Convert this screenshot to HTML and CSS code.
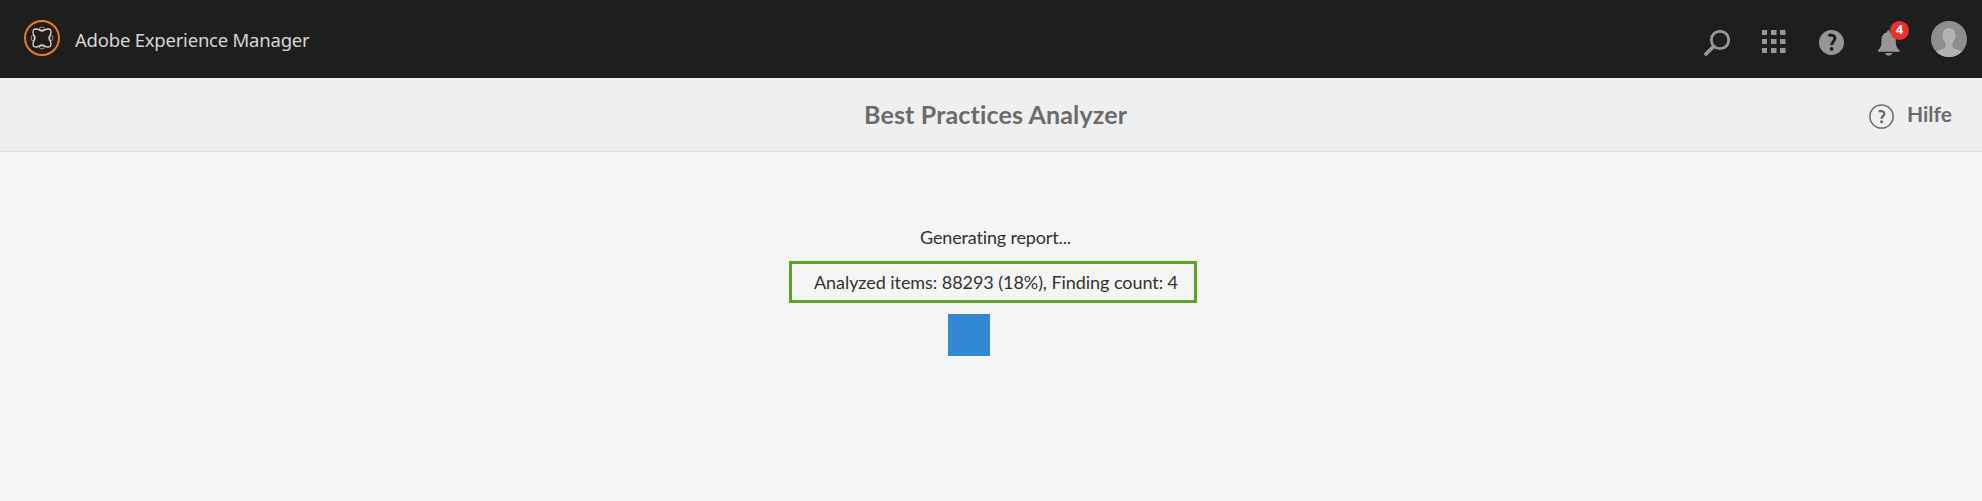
FILE: index.html
```html
<!DOCTYPE html>
<html lang="de">
<head>
<meta charset="utf-8">
<title>Best Practices Analyzer</title>
<link rel="stylesheet" href="styles.css">
</head>
<body>
<header class="shell">
  <div class="brand">
    <svg class="logo" width="36" height="36" viewBox="0 0 36 36" fill="none">
      <circle cx="18" cy="18" r="17" stroke="#f87a1c" stroke-width="1.9"/>
      <g stroke="#e9d4c9">
        <path stroke-width="1.300" d="M18 10.500C15.500 10.500 14 8.900 12 9C9.500 9.200 9.200 9.500 9 12C8.900 14 10.500 15.500 10.500 18C10.500 20.500 8.900 22 9 24C9.200 26.500 9.500 26.800 12 27C14 27.100 15.500 25.500 18 25.500C20.500 25.500 22 27.100 24 27C26.500 26.800 26.800 26.500 27 24C27.100 22 25.500 20.500 25.500 18C25.500 15.500 27.100 14 27 12C26.800 9.500 26.500 9.200 24 9C22 8.900 20.500 10.500 18 10.500Z"/>
        <g stroke-width="1" opacity=".6">
          <ellipse cx="18" cy="9.300" rx="3" ry="2.200"/>
          <ellipse cx="18" cy="26.700" rx="3" ry="2.200"/>
          <ellipse cx="9.300" cy="18" rx="2.200" ry="3"/>
          <ellipse cx="26.700" cy="18" rx="2.200" ry="3"/>
        </g>
      </g>
    </svg>
    <span class="brand-name">Adobe Experience Manager</span>
  </div>
  <nav class="tools">
    <svg class="search" width="26" height="26" viewBox="0 0 26 26" fill="none" stroke="#969696">
      <circle cx="16" cy="10" r="8.700" stroke-width="2.800"/>
      <path d="M9.400 16.600L2 24" stroke-width="3.700" stroke-linecap="round"/>
    </svg>
    <svg class="grid" width="24" height="24" viewBox="0 0 24 24" fill="#969696">
      <path d="M0 0h5v5H0zM9 0h5.500v5H9zM18 0h5.500v5H18zM0 9h5v5H0zM9 9h5.500v5H9zM18 9h5.500v5H18zM0 18h5v5H0zM9 18h5.500v5H9zM18 18h5.500v5H18z"/>
    </svg>
    <svg class="help" width="25" height="25" viewBox="0 0 25 25">
      <circle cx="12.500" cy="12.500" r="12.500" fill="#969696"/>
      <path d="M9.400 5.700C12 4.400 15.900 5.100 15.900 8.300C15.900 11.300 12.600 11.700 12.800 15.200" fill="none" stroke="#1e1e1e" stroke-width="2.900"/>
      <circle cx="12.600" cy="18.900" r="1.900" fill="#1e1e1e"/>
    </svg>
    <div class="alerts">
      <svg width="22" height="26" viewBox="0 0 22 26" fill="#969696">
        <path d="M10.500 0C11.500 0 11.700 .8 11.700 2.200C16.300 3 17.800 6.500 17.800 10.500C17.800 16 19 18.500 21.500 20.300V21.800H0V20.300C2.500 18.500 3.500 16 3.500 10.500C3.500 6.500 5 3 9.300 2.200C9.300 .8 9.500 0 10.500 0ZM7 23H14.300C13.300 26.500 8 26.500 7 23Z"/>
      </svg>
      <span class="badge">4</span>
    </div>
    <svg class="avatar" width="36" height="36" viewBox="0 0 36 36">
      <defs><clipPath id="disc"><circle cx="18" cy="18" r="18"/></clipPath></defs>
      <g clip-path="url(#disc)">
        <rect width="36" height="36" fill="#8e8e8e"/>
        <path d="M18 7C22.500 7 24.300 10 24 14C25 14.500 24.500 18 23.300 18.500C23 20.500 22 21.500 21.500 22.500V26C22 28.500 30 28.500 32 32V36H4V32C6 28.500 14 28.500 14.500 26V22.500C14 21.500 13 20.500 12.700 18.500C11.500 18 11 14.500 12 14C11.700 10 13.500 7 18 7Z" fill="#b3b3b3"/>
      </g>
    </svg>
  </nav>
</header>
<div class="titlebar">
  <h1 class="title">Best Practices Analyzer</h1>
  <a class="hilfe">
    <svg width="25" height="25" viewBox="0 0 25 25" fill="none" stroke="#6b6b6b">
      <circle cx="12.500" cy="12.500" r="11.600" stroke-width="1.500"/>
      <path d="M9.700 7.600C12 6.400 15.300 7.200 15.300 9.700C15.300 12 12.500 12.300 12.600 14.900" stroke-width="2.300"/>
      <circle cx="12.600" cy="17.800" r="1.550" fill="#6b6b6b" stroke="none"/>
    </svg>
    <span class="hilfe-label">Hilfe</span>
  </a>
</div>
<main class="content">
  <p class="status">Generating report...</p>
  <div class="progress"><span class="progress-text">Analyzed items: 88293 (18%), Finding count: 4</span></div>
  <div class="spinner"></div>
</main>
</body>
</html>
```
FILE: styles.css
```css
* { box-sizing: border-box; }
body {
  margin: 0;
  height: 501px;
  overflow: hidden;
  background: #f5f5f5;
  color: #323232;
  font-family: Lato, "Noto Sans", sans-serif;
  font-variant-ligatures: none;
}
svg { display: block; flex: none; }
.shell {
  display: flex;
  justify-content: space-between;
  height: 78px;
  padding: 20px 15px 0 24px;
  background: #1e1e1e;
}
.brand { display: flex; gap: 15px; }
.brand-name {
  padding-top: 6px;
  color: #d6d6d6;
  font: 18.5px/28px "Noto Sans", sans-serif;
  letter-spacing: -0.22px;
  white-space: nowrap;
}
.tools { display: flex; align-items: flex-start; }
.search { margin: 10px 32px 0 0; }
.grid { margin: 10px 33px 0 0; }
.help { margin: 10px 34px 0 0; }
.alerts { position: relative; margin: 10px 31px 0 0; }
.badge {
  position: absolute;
  left: 12px;
  top: -9px;
  width: 19px;
  height: 19px;
  border-radius: 50%;
  background: #ec2f2f;
  color: #fff;
  font: bold 13px/17px "Open Sans", sans-serif;
  text-align: center;
}
.avatar { margin-top: 1px; }
.titlebar {
  display: grid;
  grid-template-columns: 864px 1fr auto;
  height: 74px;
  padding-right: 30px;
  border-bottom: 1px solid #dcdcdc;
  background: #efefef;
  color: #6b6b6b;
}
.title {
  grid-column: 2;
  margin: 19px 0 0;
  font-size: 25px;
  line-height: 34px;
  letter-spacing: 0.15px;
  white-space: nowrap;
}
.hilfe { display: flex; width: 83px; padding-top: 26px; gap: 13px; }
.hilfe-label {
  margin-top: -4px;
  font-size: 21px;
  font-weight: bold;
  line-height: 28px;
}
.content { padding: 72px 0 0 789px; }
.status {
  margin: 0 0 11px 131px;
  font-size: 18px;
  line-height: 26px;
  letter-spacing: -0.15px;
  white-space: nowrap;
}
.progress {
  width: 408px;
  height: 42px;
  padding: 5px 0 0 22px;
  border: 3px solid #5da324;
}
.progress-text {
  display: block;
  font-size: 18px;
  line-height: 26px;
  letter-spacing: -0.06px;
  white-space: nowrap;
}
.spinner { width: 42px; height: 42px; margin: 11px 0 0 159px; background: #3288d2; }
```
